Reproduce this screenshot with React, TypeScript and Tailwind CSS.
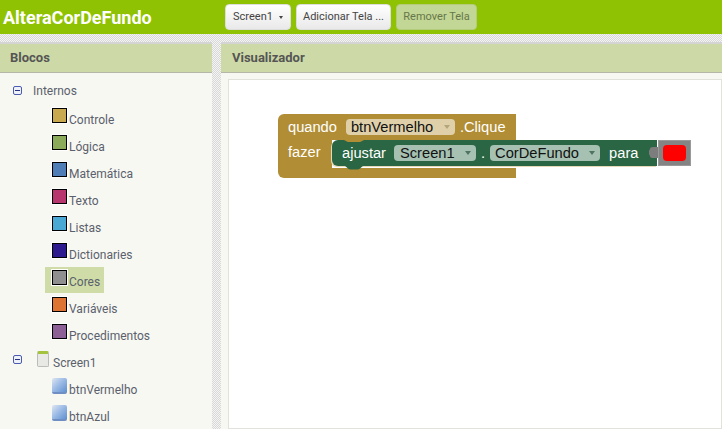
const blocks = [
  { label: 'Controle', color: 'bg-[#c9a94f]' },
  { label: 'Lógica', color: 'bg-[#8bab5a]' },
  { label: 'Matemática', color: 'bg-[#4f7db5]' },
  { label: 'Texto', color: 'bg-[#b8366e]' },
  { label: 'Listas', color: 'bg-[#4aa8d4]' },
  { label: 'Dictionaries', color: 'bg-[#2d1a8e]' },
  { label: 'Cores', color: 'bg-[#8f8f8f]', selected: true },
  { label: 'Variáveis', color: 'bg-[#dd7434]' },
  { label: 'Procedimentos', color: 'bg-[#8c5f96]' },
];

function Minus({ className = '' }: { className?: string }) {
  return (
    <span className={`flex h-[9px] w-[9px] items-center justify-center rounded-[2px] border border-[#4a5bb0] bg-[#eef0fa] ${className}`}>
      <span className="h-px w-[5px] bg-[#27337f]" />
    </span>
  );
}

function ButtonIcon() {
  return (
    <span className="mt-[3px] h-[16px] w-[15px] shrink-0 rounded-[2px] border-b-2 border-[#6f8fc4] bg-[linear-gradient(135deg,#dfe6f2_0%,#9fbde6_45%,#5f8fd0_100%)]" />
  );
}

function Panel({ title, className, titleClass, children }: { title: string; className: string; titleClass: string; children: React.ReactNode }) {
  return (
    <section className={`flex flex-col border-t-2 border-[#d4d4d4] bg-[#f8f8f3] ${className}`}>
      <h2 className={`flex h-[29px] shrink-0 items-center border-b border-[#b5b8a8] bg-[#cddaa7] text-[13px] font-bold text-[#555] ${titleClass}`}>
        {title}
      </h2>
      {children}
    </section>
  );
}

function Field({ label, className }: { label: string; className: string }) {
  const light = className.includes('bg-[#dfd0a9]');
  return (
    <span className={`flex h-[16px] items-center justify-between rounded-[4px] pr-[5px] text-[#111] ${className}`}>
      {label}
      <span
        className={`h-0 w-0 border-x-[3px] border-t-[4px] border-x-transparent ${
          light ? 'border-t-[#b6a57a]' : 'border-t-[#4e7460]'
        }`}
      />
    </span>
  );
}

function EventBlock() {
  return (
    <div className="absolute left-[49px] top-[34px] w-[414px] font-['Liberation_Sans',sans-serif] text-[14.67px] leading-none text-white">
      <div className="flex h-[26px] w-[238px] items-center rounded-tl-[6px] bg-[#b18e35] pl-[10px]">
        quando
        <Field label="btnVermelho" className="ml-[9px] w-[109px] bg-[#dfd0a9] pl-[5px]" />
        <span className="ml-[5px]">.Clique</span>
      </div>
      <div className="flex h-[28px]">
        <div className="w-[54px] bg-[#b18e35] pl-[10px] pt-[5px]">fazer</div>
        <div className="relative flex h-[26px] w-[325px] items-center rounded-l-[6px] bg-[#2b6644] pl-[10px] shadow-[-1px_1px_0_#e6d9b8]">
          ajustar
          <Field label="Screen1" className="ml-[8px] w-[82px] bg-[#a6c1b1] pl-[6px]" />
          <span className="mx-[5px]">.</span>
          <Field label="CorDeFundo" className="w-[110px] bg-[#a6c1b1] pl-[5px]" />
          <span className="ml-[9px]">para</span>
          <svg className="absolute left-[12px] top-0" width="20" height="2" viewBox="0 0 20 2">
            <path d="M0 0h20l-3 1.500q-.5.5-1.500.5h-11q-1 0-1.500-.5z" fill="#b18e35" />
          </svg>
          <svg className="absolute left-[12px] top-[25px]" width="20" height="5" viewBox="0 0 20 5">
            <path d="M0 0h20l-4 3.500q-1 1-2.500 1h-7q-1.500 0-2.500-1z" fill="#2b6644" />
          </svg>
          <svg className="absolute right-[-1px] top-[7px]" width="9" height="11" viewBox="0 0 9 11">
            <path d="M9 0H4Q1 0 1 2L0 4v3l1 2q0 2 3 2h5z" fill="#7d7d7d" />
          </svg>
          <span className="absolute left-[326px] top-0 flex h-[26px] w-[33px] items-center justify-center border border-[#9a9a9a] bg-[#848484]">
            <span className="h-[16px] w-[23px] rounded-[4px] bg-[#ff0000]" />
          </span>
        </div>
      </div>
      <div className="h-[10px] w-[238px] rounded-bl-[6px] bg-[#b18e35]" />
    </div>
  );
}

export default function App() {
  return (
    <div className="h-[429px] w-[722px] overflow-hidden bg-[repeating-conic-gradient(#d8d8d8_0_25%,#f4f4f4_0_50%)] bg-[length:2px_2px] font-['Roboto',sans-serif]">
      <header className="flex h-[34px] items-center bg-[#8fc202]">
        <h1 className="w-[225px] pl-[3px] text-[18px] font-bold text-white">AlteraCorDeFundo</h1>
        <div className="flex gap-[5px] text-[11px] text-[#444]">
          <button className="flex h-[26px] w-[66px] items-center justify-center gap-[6px] rounded-[4px] border border-[#ddd] bg-[linear-gradient(#fff,#e9e9e9)]">
            Screen1
            <span className="h-0 w-0 border-x-[2.500px] border-t-[3px] border-x-transparent border-t-[#444]" />
          </button>
          <button className="h-[26px] w-[95px] rounded-[4px] border border-[#ddd] bg-[linear-gradient(#fff,#e9e9e9)]">
            Adicionar Tela ...
          </button>
          <button className="h-[26px] w-[81px] rounded-[4px] border border-[#b3cb7a] bg-[#c2d795] text-[#66764a]">
            Remover Tela
          </button>
        </div>
      </header>
      <main className="flex h-[395px] gap-[9px] pt-[8px]">
        <Panel title="Blocos" className="w-[212px] shrink-0" titleClass="pl-[10px]">
          <div className="text-[12px] leading-[27px] text-[#5a616c]">
            <div className="mt-[4px] flex h-[27px] items-center pl-[13px]">
              <Minus />
              <span className="ml-[11px] mt-[2px]">Internos</span>
            </div>
            {blocks.map((b) => (
              <div key={b.label} className="flex h-[27px] pl-[45px] pt-[1px]">
                <div className={`flex h-[26px] items-start pl-[7px] pr-[1px] ${b.selected ? 'w-[59px] bg-[#cfdca8]' : ''}`}>
                  <span className={`mt-[3px] h-[15px] w-[15px] shrink-0 border border-black shadow-[0_0_0_1px_#fff] ${b.color}`} />
                  <span className="ml-[2px] mt-[2px]">{b.label}</span>
                </div>
              </div>
            ))}
            <div className="mt-[1px] flex h-[27px] items-center pl-[13px] pt-[2px]">
              <Minus className="mb-[7px]" />
              <span className="mb-[7px] ml-[15px] h-[16px] w-[12px] rounded-[2px] border border-[#bbb] border-t-[3px] border-t-[#a3c23d] bg-[#e8e8e4]" />
              <span className="ml-[4px] mt-[2px]">Screen1</span>
            </div>
            {['btnVermelho', 'btnAzul'].map((name) => (
              <div key={name} className="flex h-[27px] items-start pl-[52px]">
                <ButtonIcon />
                <span className="ml-[2px] mt-[2px]">{name}</span>
              </div>
            ))}
          </div>
        </Panel>
        <Panel title="Visualizador" className="flex-1" titleClass="pl-[11px]">
          <div className="relative ml-[7px] mt-[6px] flex-1 border border-[#e2e2dc] bg-white">
            <EventBlock />
          </div>
        </Panel>
      </main>
    </div>
  );
}
